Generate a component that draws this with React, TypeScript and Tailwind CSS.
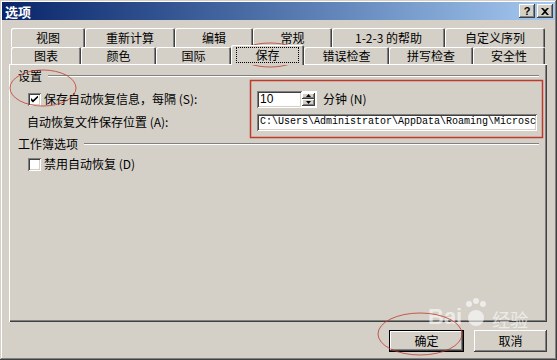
import React from "react";

const raised =
  "shadow-[inset_-1px_-1px_#404040,inset_1px_1px_#ffffff,inset_-2px_-2px_#808080,inset_2px_2px_#d4d0c8]";
const sunken =
  "shadow-[inset_1px_1px_#808080,inset_-1px_-1px_#ffffff,inset_2px_2px_#404040,inset_-2px_-2px_#d4d0c8]";

const row1 = [
  { name: "视图", w: 74 },
  { name: "重新计算", w: 90 },
  { name: "编辑", w: 78 },
  { name: "常规", w: 79 },
  { name: "1-2-3 的帮助", w: 113 },
  { name: "自定义序列", w: 100 },
];

const row2 = [
  { name: "图表", w: 70 },
  { name: "颜色", w: 75 },
  { name: "国际", w: 75 },
  { name: "保存", w: 73, active: true },
  { name: "错误检查", w: 85 },
  { name: "拼写检查", w: 84 },
  { name: "安全性", w: 72 },
];

function Tab({ name, w, active }: { name: string; w: number; active?: boolean }) {
  return (
    <div
      style={{ width: w }}
      className={`flex items-center justify-center rounded-t-[2px] bg-[#d4d0c8] shadow-[inset_1px_1px_#ffffff,inset_-1px_0_#404040,inset_-2px_0_#808080] ${
        active ? "relative z-10 -mt-[2px] -mb-[2px] h-[20px]" : "h-full"
      }`}
    >
      <span className={active ? "border border-dotted border-black px-[18px] leading-[14px]" : ""}>{name}</span>
    </div>
  );
}

function Checkbox({ checked }: { checked?: boolean }) {
  return (
    <div className={`flex h-[13px] w-[13px] items-center justify-center bg-white ${sunken}`}>
      {checked && (
        <svg width="7" height="7" viewBox="0 0 7 7">
          <path d="M0 2 L0 4.5 L2 6.5 L7 1.5 L7 -0.5 L2 4 Z" fill="black" />
        </svg>
      )}
    </div>
  );
}

function GroupTitle({ text }: { text: string }) {
  return (
    <div className="flex h-[16px] items-center pr-[8px]">
      <span>{text}</span>
      <div className="ml-[6px] flex-1 border-t border-b border-t-[#808080] border-b-white" />
    </div>
  );
}

export default function App() {
  return (
    <div
      className="relative flex h-[360px] w-[557px] flex-col bg-[#d4d0c8] text-[12px] text-black shadow-[inset_-1px_-1px_#404040,inset_1px_1px_#d4d0c8,inset_-2px_-2px_#808080,inset_2px_2px_#ffffff]"
      style={{ fontFamily: '"Noto Sans CJK SC", "Liberation Sans", sans-serif' }}
    >
      {/* Title bar */}
      <div className="mx-[2px] mt-[2px] flex h-[18px] items-center justify-between bg-gradient-to-r from-[#0a246a] to-[#a6caf0] pl-[3px] pr-[2px]">
        <span className="text-[13px] font-bold leading-none text-white">选项</span>
        <div className="flex gap-[2px]">
          <div className={`flex h-[14px] w-[16px] items-center justify-center bg-[#d4d0c8] ${raised}`}>
            <span className="text-[11px] font-bold leading-none" style={{ fontFamily: '"Liberation Sans", sans-serif' }}>?</span>
          </div>
          <div className={`flex h-[14px] w-[16px] items-center justify-center bg-[#d4d0c8] ${raised}`}>
            <svg width="8" height="7" viewBox="0 0 8 7">
              <path d="M0 0 L2 0 L4 2 L6 0 L8 0 L5 3.5 L8 7 L6 7 L4 5 L2 7 L0 7 L3 3.5 Z" fill="black" />
            </svg>
          </div>
        </div>
      </div>

      {/* Tabs */}
      <div className="ml-[11px] mt-[8px] flex h-[19px]">
        {row1.map((t) => (
          <Tab key={t.name} {...t} />
        ))}
      </div>
      <div className="ml-[11px] flex h-[17px]">
        {row2.map((t) => (
          <Tab key={t.name} {...t} />
        ))}
      </div>

      {/* Panel */}
      <div className="ml-[9px] mr-[10px] flex h-[258px] flex-col pl-[9px] pt-[4px] shadow-[inset_1px_1px_#ffffff,inset_-1px_-1px_#404040,inset_-2px_-2px_#808080]">
        <GroupTitle text="设置" />
        <div className="mt-[6px] flex h-[18px] items-center">
          <div className="flex w-[239px] items-center pl-[10px]">
            <Checkbox checked />
            <span className="ml-[3px]">保存自动恢复信息，每隔 (S):</span>
          </div>
          <div className="flex h-[17px]">
            <div className={`flex w-[45px] items-center bg-white pl-[3px] ${sunken}`}>
              <span className="leading-none" style={{ fontFamily: '"Liberation Sans", sans-serif' }}>10</span>
            </div>
            <div className="flex w-[15px] flex-col bg-white py-[2px] pr-[2px]">
              <div className={`flex flex-1 items-center justify-center bg-[#d4d0c8] ${raised}`}>
                <svg width="5" height="3" viewBox="0 0 5 3"><path d="M2.5 0 L5 3 L0 3 Z" fill="black" /></svg>
              </div>
              <div className={`flex flex-1 items-center justify-center bg-[#d4d0c8] ${raised}`}>
                <svg width="5" height="3" viewBox="0 0 5 3"><path d="M0 0 L5 0 L2.5 3 Z" fill="black" /></svg>
              </div>
            </div>
          </div>
          <span className="ml-[6px]">分钟 (N)</span>
        </div>
        <div className="mt-[5px] flex h-[18px] items-center">
          <div className="w-[239px] pl-[9px]">自动恢复文件保存位置 (A):</div>
          <div className={`flex h-[17px] w-[280px] items-center overflow-hidden whitespace-nowrap bg-white pl-[3px] ${sunken}`}>
            <span className="text-[10px] leading-none" style={{ fontFamily: '"Liberation Mono", monospace' }}>
              C:\Users\Administrator\AppData\Roaming\Microsc
            </span>
          </div>
        </div>
        <div className="mt-[5px]">
          <GroupTitle text="工作簿选项" />
        </div>
        <div className="mt-[3px] flex h-[18px] items-center pl-[10px]">
          <Checkbox />
          <span className="ml-[3px]">禁用自动恢复 (D)</span>
        </div>
      </div>

      {/* Buttons */}
      <div className="mr-[10px] mt-[8px] flex justify-end gap-[10px]">
        <div className="flex h-[22px] w-[75px] items-center justify-center bg-[#d4d0c8] shadow-[inset_-1px_-1px_#000000,inset_1px_1px_#000000,inset_-2px_-2px_#404040,inset_2px_2px_#ffffff,inset_-3px_-3px_#808080]">
          确定
        </div>
        <div className={`flex h-[22px] w-[73px] items-center justify-center bg-[#d4d0c8] ${raised}`}>取消</div>
      </div>

      {/* Watermark */}
      <div className="pointer-events-none absolute left-[428px] top-[298px] flex items-end text-white/60">
        <span className="text-[22px] font-bold leading-none" style={{ fontFamily: '"Liberation Sans", sans-serif' }}>Bai</span>
        <svg width="28" height="30" viewBox="0 0 28 30" className="opacity-60">
          <circle cx="7" cy="6" r="3" fill="white" />
          <circle cx="14" cy="3" r="3" fill="white" />
          <circle cx="21" cy="6" r="3" fill="white" />
          <circle cx="14" cy="20" r="8" fill="white" />
        </svg>
        <span className="ml-[2px] text-[18px] leading-none">经验</span>
      </div>

      {/* Annotations */}
      <svg className="pointer-events-none absolute left-0 top-0" width="557" height="360">
        <ellipse cx="43" cy="88" rx="33" ry="18" fill="none" stroke="#c0392b" strokeWidth="1" opacity="0.8" />
        <ellipse cx="270" cy="55" rx="30" ry="12" fill="none" stroke="#c0392b" strokeWidth="1" opacity="0.8" />
        <ellipse cx="420" cy="334" rx="42" ry="21" fill="none" stroke="#c0392b" strokeWidth="1" opacity="0.8" />
        <rect x="250.5" y="80.5" width="292" height="57" fill="none" stroke="#c0392b" strokeWidth="1.5" />
      </svg>
    </div>
  );
}
